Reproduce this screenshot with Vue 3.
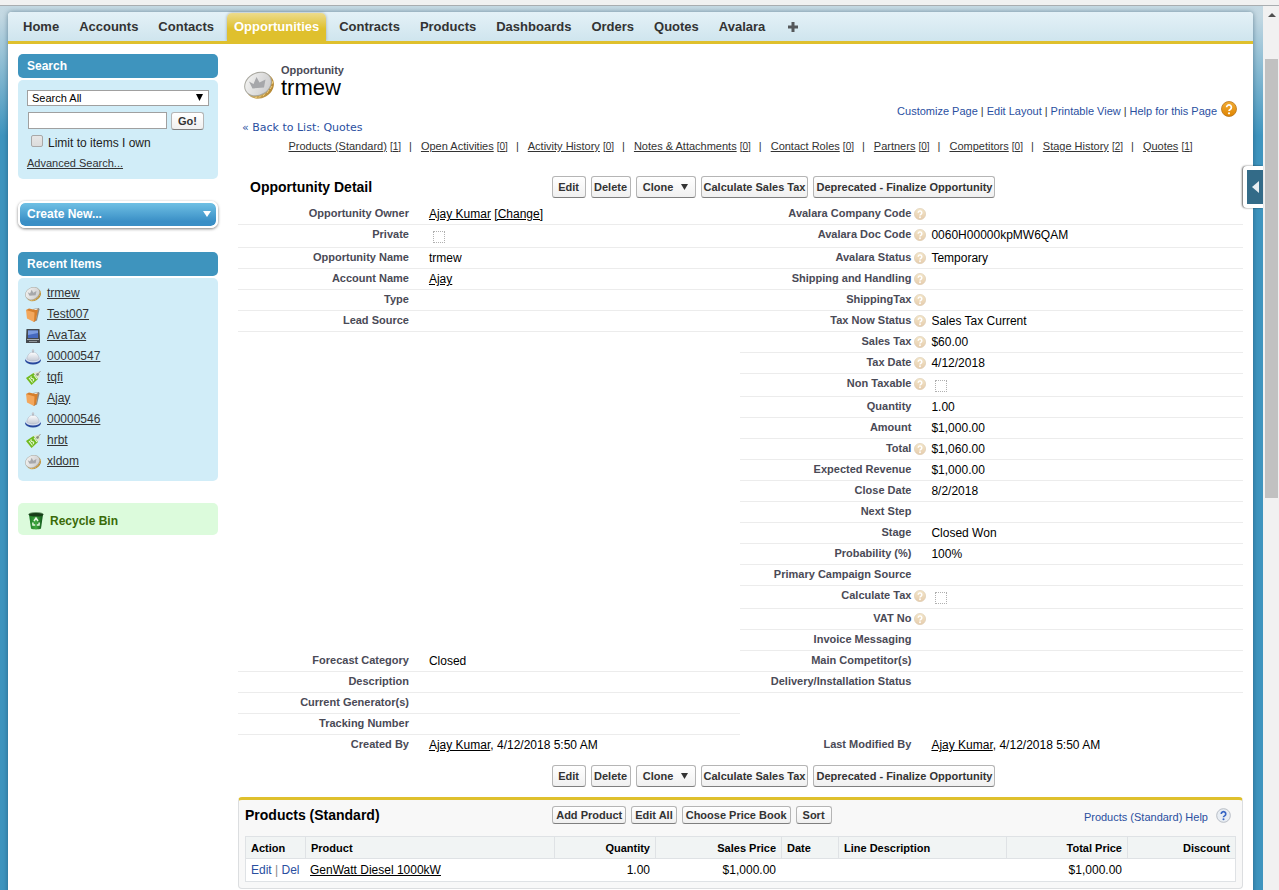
<script setup>
import { ref } from 'vue'

const tabs = ['Home', 'Accounts', 'Contacts', 'Opportunities', 'Contracts', 'Products', 'Dashboards', 'Orders', 'Quotes', 'Avalara']
const activeTab = 'Opportunities'
const query = ref('')
const limitOwn = ref(false)

const recent = [
  { icon: 'coin', name: 'trmew' },
  { icon: 'folder', name: 'Test007' },
  { icon: 'screen', name: 'AvaTax' },
  { icon: 'bell', name: '00000547' },
  { icon: 'tag', name: 'tqfi' },
  { icon: 'folder', name: 'Ajay' },
  { icon: 'bell', name: '00000546' },
  { icon: 'tag', name: 'hrbt' },
  { icon: 'coin', name: 'xldom' },
]

const pageLinks = ['Customize Page', 'Edit Layout', 'Printable View', 'Help for this Page']

const related = [
  ['Products (Standard)', 1], ['Open Activities', 0], ['Activity History', 0], ['Notes & Attachments', 0],
  ['Contact Roles', 0], ['Partners', 0], ['Competitors', 0], ['Stage History', 2], ['Quotes', 1],
]

const stamp = { link: 'Ajay Kumar', text: ', 4/12/2018 5:50 AM', plain: true }

const rows = [
  [{ label: 'Opportunity Owner', link: 'Ajay Kumar', change: true }, { label: 'Avalara Company Code', help: true }],
  [{ label: 'Private', check: true }, { label: 'Avalara Doc Code', help: true, text: '0060H00000kpMW6QAM' }],
  [{ label: 'Opportunity Name', text: 'trmew' }, { label: 'Avalara Status', help: true, text: 'Temporary' }],
  [{ label: 'Account Name', link: 'Ajay' }, { label: 'Shipping and Handling', help: true }],
  [{ label: 'Type' }, { label: 'ShippingTax', help: true }],
  [{ label: 'Lead Source' }, { label: 'Tax Now Status', help: true, text: 'Sales Tax Current' }],
  [null, { label: 'Sales Tax', help: true, text: '$60.00' }],
  [null, { label: 'Tax Date', help: true, text: '4/12/2018' }],
  [null, { label: 'Non Taxable', help: true, check: true }],
  [null, { label: 'Quantity', text: '1.00' }],
  [null, { label: 'Amount', text: '$1,000.00' }],
  [null, { label: 'Total', help: true, text: '$1,060.00' }],
  [null, { label: 'Expected Revenue', text: '$1,000.00' }],
  [null, { label: 'Close Date', text: '8/2/2018' }],
  [null, { label: 'Next Step' }],
  [null, { label: 'Stage', text: 'Closed Won' }],
  [null, { label: 'Probability (%)', text: '100%' }],
  [null, { label: 'Primary Campaign Source' }],
  [null, { label: 'Calculate Tax', help: true, check: true }],
  [null, { label: 'VAT No', help: true }],
  [null, { label: 'Invoice Messaging' }],
  [{ label: 'Forecast Category', text: 'Closed' }, { label: 'Main Competitor(s)' }],
  [{ label: 'Description' }, { label: 'Delivery/Installation Status' }],
  [{ label: 'Current Generator(s)' }, null],
  [{ label: 'Tracking Number' }, null],
  [{ ...stamp, label: 'Created By' }, { ...stamp, label: 'Last Modified By' }],
]

const actions = ['Edit', 'Delete', 'Clone', 'Calculate Sales Tax', 'Deprecated - Finalize Opportunity']
const productActions = ['Add Product', 'Edit All', 'Choose Price Book', 'Sort']
</script>

<template>
  <svg class="defs" aria-hidden="true">
    <defs>
      <linearGradient id="gFace" x1="0" y1="0" x2="1" y2="1">
        <stop offset="0" stop-color="#f6f6f4" /><stop offset="1" stop-color="#c8c8ca" />
      </linearGradient>
      <linearGradient id="gEdge" x1="0" y1="0" x2="1" y2="1">
        <stop offset="0" stop-color="#a3a29a" /><stop offset="0.5" stop-color="#c9a75c" /><stop offset="1" stop-color="#b07c22" />
      </linearGradient>
      <linearGradient id="gOrange" x1="0" y1="0" x2="0" y2="1">
        <stop offset="0" stop-color="#f2ad35" /><stop offset="1" stop-color="#df8400" />
      </linearGradient>
      <linearGradient id="gHint" x1="0" y1="0" x2="0" y2="1">
        <stop offset="0" stop-color="#f3e6c9" /><stop offset="1" stop-color="#e6cdae" />
      </linearGradient>
      <linearGradient id="gBell" x1="0" y1="0" x2="0" y2="1">
        <stop offset="0" stop-color="#ffffff" /><stop offset="1" stop-color="#c3c9d4" />
      </linearGradient>
      <linearGradient id="gBin" x1="0" y1="0" x2="1" y2="0">
        <stop offset="0" stop-color="#1d7a26" /><stop offset="0.5" stop-color="#3fa83f" /><stop offset="1" stop-color="#11501a" />
      </linearGradient>
      <symbol id="coin" viewBox="0 0 30 30">
        <ellipse cx="16" cy="16" rx="14.500" ry="12" transform="rotate(-30 16 16)" fill="url(#gEdge)" />
        <path d="M11 28l2-1M15 27.500l2-2M19 26l2-2.500M23 23l2-3M26 19l2-3M28 14l1-3" stroke="#f0d080" stroke-width="1" />
        <ellipse cx="14" cy="14" rx="14.500" ry="11.500" transform="rotate(-30 14 14)" fill="#a9a8a0" />
        <ellipse cx="14" cy="14" rx="13.500" ry="10.500" transform="rotate(-30 14 14)" fill="url(#gFace)" />
        <path d="M8.500 18.500L5 11.500l4.500 2.500L12.500 7l3 5.500L21.500 9.500l-1.500 8z" fill="#a6a7aa" />
      </symbol>
      <symbol id="folder" viewBox="0 0 16 16">
        <path d="M8 2l6-1 .5 1.500-2.500 11L8.500 15z" fill="#8f8c86" />
        <path d="M7 3l5.500-1.500-1.500 11-2 1z" fill="#f4f0e4" />
        <path d="M1 3l3-1.500L10.500 3 13 2.500 11 13l-2 2z" fill="#d67f2c" />
        <path d="M1 3l8.500 2.500L9 15l-7-3.500z" fill="#f3a75c" />
      </symbol>
      <symbol id="screen" viewBox="0 0 16 16">
        <path d="M1.500 1h13L15 11v4H1v-4z" fill="#45494e" />
        <path d="M3 2.500h10V10H3z" fill="#4568bf" />
        <path d="M3 2.500h10V5L3 7z" fill="#7b9be0" />
        <path d="M2 11h12v1H2z" fill="#a8adb2" />
        <path d="M4 13h8v1H4z" fill="#8f959a" />
      </symbol>
      <symbol id="bell" viewBox="0 0 16 16">
        <ellipse cx="8" cy="11.500" rx="7.800" ry="4" fill="#27479c" />
        <ellipse cx="8" cy="10" rx="7.500" ry="3.500" fill="#d8e0ee" />
        <path d="M2 10C2 6 5 3 8 3s6 3 6 7c-2.500 2.500-9.500 2.500-12 0z" fill="url(#gBell)" stroke="#aab2c0" stroke-width="0.500" />
        <path d="M7.300 3.500V1h1.400v2.500z" fill="#8d94a0" />
        <circle cx="8" cy="1.500" r="1.200" fill="#c4c8cf" />
      </symbol>
      <symbol id="tag" viewBox="0 0 16 16">
        <path d="M9 2.500l4-1 2 1v4L7 15 1 8.500z" fill="#dfe6d3" />
        <path d="M1 8l7.500-5 4.500 6-6.500 6z" fill="#6fba1f" />
        <path d="M4 8l3.500 4.500M6.500 6.500c-1.500 1 0 2 1 2.200s2 .8.5 2.300M9 5l3 4" fill="none" stroke="#e9f7d8" stroke-width="1.100" />
        <circle cx="12.500" cy="4.500" r="1.200" fill="#7a8070" />
        <path d="M12.500 4.500L15.500 1" stroke="#9a9a92" stroke-width="1" />
      </symbol>
      <symbol id="bin" viewBox="0 0 16 18">
        <path d="M1 2.500h14L13 16.500c-2 1.200-8 1.200-10 0z" fill="url(#gBin)" />
        <ellipse cx="8" cy="2.500" rx="7.500" ry="2" fill="#173d18" />
        <path d="M0.500 2.500a7.500 2 0 0 1 15 0" fill="none" stroke="#6f9a70" stroke-width="0.800" />
        <path d="M6 9l2-3 2 3M4.800 10.500L5 13h2.200M11.200 10.500L11 13H8.800" fill="none" stroke="#e4f6e0" stroke-width="1.500" />
      </symbol>
      <symbol id="help" viewBox="0 0 16 16">
        <circle cx="8" cy="8" r="7.500" fill="url(#gOrange)" stroke="#b8741a" stroke-width="0.800" />
        <path d="M5.600 6.300a2.400 2.400 0 1 1 3.600 2.100c-.9.500-1.200.8-1.200 1.700" fill="none" stroke="#fff" stroke-width="1.700" />
        <circle cx="8" cy="12.300" r="1.100" fill="#fff" />
      </symbol>
      <symbol id="hint" viewBox="0 0 16 16">
        <circle cx="8" cy="8" r="7.500" fill="url(#gHint)" stroke="#dcc9ae" stroke-width="0.800" />
        <path d="M5.600 6.300a2.400 2.400 0 1 1 3.600 2.100c-.9.500-1.200.8-1.200 1.700" fill="none" stroke="#fff" stroke-width="2" />
        <circle cx="8" cy="12.300" r="1.200" fill="#fff" />
      </symbol>
      <symbol id="helpBlue" viewBox="0 0 16 16">
        <circle cx="8" cy="8" r="7.300" fill="#e8edf3" stroke="#b4bac2" stroke-width="1" />
        <path d="M5.600 6.300a2.400 2.400 0 1 1 3.600 2.100c-.9.500-1.200.8-1.200 1.500" fill="none" stroke="#3564c4" stroke-width="1.800" />
        <circle cx="8" cy="12" r="1.100" fill="#3564c4" />
      </symbol>
    </defs>
  </svg>

  <div class="window">
    <div class="edge"></div>
    <div class="viewport">
      <div class="page">
        <div class="shell">
          <nav class="tabs">
            <a v-for="t in tabs" :key="t" href="#" class="tab" :class="{ active: t === activeTab }">{{ t }}</a>
            <a href="#" class="tab plus" aria-label="All Tabs">
              <svg width="10" height="10" viewBox="0 0 10 10"><path d="M3.500 0h3v3.500H10v3H6.500V10h-3V6.500H0v-3h3.500z" fill="#55585b" /></svg>
            </a>
          </nav>

          <div class="body">
            <aside class="side">
              <section class="module">
                <h2 class="module-head">Search</h2>
                <form class="module-body search" @submit.prevent>
                  <div class="select-wrap">
                    <select aria-label="Search scope" class="scope"><option>Search All</option></select>
                    <svg class="select-arrow" width="7" height="7" viewBox="0 0 7 7"><path d="M0 0h7L3.500 7z" fill="#000" /></svg>
                  </div>
                  <div class="find">
                    <input v-model="query" type="text" aria-label="Search text" class="query" />
                    <button type="submit" class="btn go">Go!</button>
                  </div>
                  <label class="limit"><input v-model="limitOwn" type="checkbox" />Limit to items I own</label>
                  <a href="#" class="advanced">Advanced Search...</a>
                </form>
              </section>

              <button type="button" class="create">
                Create New...
                <svg width="8" height="6" viewBox="0 0 8 6"><path d="M0 0h8L4 6z" fill="#fff" /></svg>
              </button>

              <section class="module">
                <h2 class="module-head">Recent Items</h2>
                <ul class="module-body recent">
                  <li v-for="(r, i) in recent" :key="i">
                    <svg width="16" height="16"><use :href="'#' + r.icon" /></svg>
                    <a href="#">{{ r.name }}</a>
                  </li>
                </ul>
              </section>

              <a href="#" class="recycle">
                <svg width="16" height="18"><use href="#bin" /></svg>
                Recycle Bin
              </a>
            </aside>

            <main class="main">
              <header class="title">
                <svg width="30" height="30"><use href="#coin" /></svg>
                <div>
                  <h1 class="kind">Opportunity</h1>
                  <h2 class="record">trmew</h2>
                </div>
                <div class="page-links">
                  <template v-for="(l, i) in pageLinks" :key="l"><span v-if="i">|</span><a href="#">{{ l }}</a></template>
                  <svg class="help-big" width="16" height="16"><use href="#help" /></svg>
                </div>
              </header>

              <div class="back">« <a href="#">Back to List: Quotes</a></div>

              <nav class="related">
                <template v-for="(r, i) in related" :key="r[0]">
                  <span v-if="i" class="bar">|</span>
                  <a href="#"><span class="name">{{ r[0] }}</span> <span class="count">[<u>{{ r[1] }}</u>]</span></a>
                </template>
              </nav>

              <section class="detail">
                <div class="bar-row">
                  <h3>Opportunity Detail</h3>
                  <div class="buttons">
                    <button v-for="a in actions" :key="a" type="button" class="btn large" :class="{ menu: a === 'Clone', first: a === 'Edit' }">
                      {{ a }}<svg v-if="a === 'Clone'" width="7" height="6" viewBox="0 0 7 6"><path d="M0 0h7L3.500 6z" fill="#333" /></svg>
                    </button>
                  </div>
                </div>

                <table class="fields">
                  <tbody>
                    <tr v-for="(row, i) in rows" :key="i" :class="{ tall: row.some(c => c && c.check) }">
                      <template v-for="(c, j) in row" :key="j">
                        <template v-if="c">
                          <th scope="row" :class="{ plain: c.plain }">
                            <label v-if="c.check" :for="'f' + i + j">{{ c.label }}</label>
                            <template v-else>{{ c.label }}</template>
                            <span class="hint"><svg v-if="c.help" width="12" height="12"><use href="#hint" /></svg></span>
                          </th>
                          <td :class="{ plain: c.plain }">
                            <input v-if="c.check" :id="'f' + i + j" type="checkbox" disabled class="flag" />
                            <a v-if="c.link" href="#">{{ c.link }}</a>{{ c.text }}
                            <template v-if="c.change"><a href="#">[Change]</a></template>
                          </td>
                        </template>
                        <td v-else colspan="2" class="plain"></td>
                      </template>
                    </tr>
                  </tbody>
                </table>

                <div class="bar-row bottom">
                  <div class="buttons">
                    <button v-for="a in actions" :key="a" type="button" class="btn large" :class="{ menu: a === 'Clone', first: a === 'Edit' }">
                      {{ a }}<svg v-if="a === 'Clone'" width="7" height="6" viewBox="0 0 7 6"><path d="M0 0h7L3.500 6z" fill="#333" /></svg>
                    </button>
                  </div>
                </div>
              </section>

              <section class="list">
                <div class="list-head">
                  <h3>Products (Standard)</h3>
                  <div class="buttons">
                    <button v-for="a in productActions" :key="a" type="button" class="btn small">{{ a }}</button>
                  </div>
                  <a href="#" class="list-help"><span>Products (Standard) Help</span>
                    <svg width="15" height="15"><use href="#helpBlue" /></svg>
                  </a>
                </div>
                <table class="grid">
                  <colgroup>
                    <col class="c-action" /><col class="c-product" /><col class="c-quantity" /><col class="c-price" />
                    <col class="c-date" /><col class="c-line" /><col class="c-total" /><col class="c-discount" />
                  </colgroup>
                  <thead>
                    <tr>
                      <th>Action</th><th>Product</th><th class="num">Quantity</th><th class="num">Sales Price</th>
                      <th>Date</th><th>Line Description</th><th class="num">Total Price</th><th class="num">Discount</th>
                    </tr>
                  </thead>
                  <tbody>
                    <tr>
                      <td class="act"><a href="#">Edit</a> | <a href="#">Del</a></td>
                      <td class="prod"><a href="#">GenWatt Diesel 1000kW</a></td>
                      <td class="num">1.00</td>
                      <td class="num">$1,000.00</td>
                      <td></td><td></td>
                      <td class="num">$1,000.00</td>
                      <td></td>
                    </tr>
                  </tbody>
                </table>
              </section>
            </main>
          </div>
        </div>
        <button type="button" class="drawer" aria-label="Open side panel">
          <span><svg width="7" height="12" viewBox="0 0 7 12"><path d="M7 0v12L0 6z" fill="#e8eef2" /></svg></span>
        </button>
      </div>
      <div class="scroll">
        <svg width="8" height="4" viewBox="0 0 8 4"><path d="M0 4l4-4 4 4z" fill="#505050" /></svg>
        <div class="thumb"></div>
      </div>
    </div>
  </div>
</template>

<style>
body {
  margin: 0;
  background: #3e94be;
}
</style>

<style scoped>
.defs {
  position: absolute;
  width: 0;
  height: 0;
}
.window {
  display: flex;
  flex-direction: column;
  height: 100vh;
  overflow: hidden;
  font: 12px/16px "Liberation Sans", Arial, sans-serif;
  color: #000;
}
h1, h2, h3, ul {
  margin: 0;
  padding: 0;
}
svg {
  display: block;
  flex: none;
}
.edge {
  flex: none;
  height: 5px;
  background: #f1f1f1;
  border-bottom: 1px solid #a9adb0;
}
.viewport {
  flex: 1;
  display: flex;
  min-height: 0;
}
.page {
  position: relative;
  flex: 1;
  min-width: 0;
  padding: 6px 10px 0 8px;
  background: linear-gradient(#c5d9e3 0, #c3d8e2 10px, #3e94be 130px);
}
.shell {
  min-height: 100%;
  background: #fff;
  border-radius: 4px 4px 0 0;
  box-shadow: 0 0 5px rgba(20, 60, 85, 0.5);
}
.tabs {
  display: flex;
  align-items: stretch;
  gap: 6px;
  height: 29px;
  padding-left: 8px;
  border-bottom: 3px solid #dfc02d;
  border-radius: 4px 4px 0 0;
  background: linear-gradient(#e4f1f7, #cfe5ee);
}
.tab {
  padding: 0 7px;
  color: #333;
  font-size: 13px;
  font-weight: bold;
  line-height: 29px;
  text-decoration: none;
}
.tab.active {
  margin-top: 1px;
  line-height: 27px;
  color: #fff;
  border-radius: 5px 5px 0 0;
  background: linear-gradient(#ecdb8c, #dfc02d 16px);
  box-shadow: 0 0 3px rgba(0, 0, 0, 0.3);
  clip-path: inset(-4px -4px 0);
}
.plus {
  display: flex;
  align-items: center;
  margin-left: 3px;
}
.body {
  display: flex;
  gap: 20px;
  padding: 10px;
}
.side {
  flex: none;
  width: 200px;
}
.module-head {
  height: 24px;
  padding-left: 9px;
  border-radius: 5px;
  background: #3e94be;
  color: #fff;
  font-size: 12px;
  line-height: 24px;
}
.module-body {
  margin-top: 2px;
  border-radius: 5px;
  background: #d1edf8;
}
.search {
  padding: 10px 9px 8px;
}
.select-wrap {
  position: relative;
}
.select-arrow {
  position: absolute;
  top: 4px;
  right: 6px;
  pointer-events: none;
}
.scope {
  display: block;
  box-sizing: border-box;
  width: 100%;
  height: 16px;
  padding: 0 4px;
  border: 1px solid #a0a0a0;
  border-radius: 0;
  background: #fff;
  color: #000;
  font: 11px/14px "Liberation Sans", Arial, sans-serif;
  appearance: none;
}
.find {
  display: flex;
  gap: 4px;
  margin: 6px 5px 0 1px;
}
.query {
  box-sizing: border-box;
  flex: 1;
  min-width: 0;
  height: 17px;
  padding: 0 2px;
  border: 1px solid #a0a0a0;
}
.limit {
  display: flex;
  align-items: center;
  gap: 5px;
  height: 20px;
  margin: 3px 0 2px 4px;
  color: #222;
}
.limit input {
  box-sizing: border-box;
  width: 12px;
  height: 12px;
  margin: 0 0 5px;
  border: 1px solid #a8a8a8;
  border-radius: 2px;
  background: linear-gradient(#e6e6e6, #dcdcdc);
  appearance: none;
}
.limit input:checked {
  background: #3e94be;
}
.advanced {
  color: #333;
  font-size: 11px;
}
.btn {
  box-sizing: border-box;
  display: flex;
  align-items: center;
  justify-content: center;
  min-width: 36px;
  height: 22px;
  padding: 0 2px;
  border: 1px solid #b5b5b5;
  border-bottom-color: #7f7f7f;
  border-radius: 3px;
  background: linear-gradient(#fff, #f0f0f0);
  color: #333;
  font: bold 11px/16px "Liberation Sans", Arial, sans-serif;
  white-space: nowrap;
}
.btn.large {
  min-width: 40px;
}
.btn.first {
  min-width: 34px;
}
.btn.menu {
  gap: 8px;
  min-width: 60px;
}
.btn.small {
  height: 18px;
  padding: 0 3px;
}
.btn.go {
  min-width: 33px;
  height: 18px;
}
.create {
  box-sizing: border-box;
  display: flex;
  align-items: center;
  justify-content: space-between;
  width: 200px;
  height: 27px;
  margin: 22px 0 24px;
  padding: 0 5px 2px 7px;
  border: 2px solid #fff;
  border-radius: 7px;
  background: linear-gradient(#6fc0e4, #3a8fc6 80%) padding-box;
  box-shadow: 0 1px 3px rgba(0, 0, 0, 0.5);
  color: #fff;
  font: bold 12px/20px "Liberation Sans", Arial, sans-serif;
}
.recent {
  padding: 4px 7px 10px;
  list-style: none;
}
.recent li {
  display: flex;
  align-items: center;
  gap: 6px;
  height: 21px;
}
.recent svg {
  margin-top: 3px;
}
.recent a {
  color: #333;
}
.recycle {
  display: flex;
  align-items: center;
  gap: 6px;
  height: 32px;
  margin-top: 22px;
  padding: 3px 10px 0;
  box-sizing: border-box;
  border-radius: 5px;
  background: #dcfbdc;
  color: #3a6a08;
  font-weight: bold;
  text-decoration: none;
}
.main {
  flex: 1;
  min-width: 0;
}
.title {
  display: flex;
  gap: 7px;
  padding: 8px 6px 0;
}
.title > svg {
  margin-top: 8px;
}
.kind {
  color: #4a4a56;
  font-size: 11px;
  line-height: 16px;
}
.record {
  font-size: 22px;
  font-weight: normal;
  line-height: 20px;
}
.page-links {
  display: flex;
  align-items: flex-end;
  gap: 3px;
  height: 18px;
  margin: 39px 0 0 auto;
  color: #333;
  font-size: 11px;
  line-height: 16px;
}
.help-big {
  margin: 0 0 2px 1px;
}
a {
  color: #2a4f9f;
}
.page-links a,
.back a,
.list-help,
.act a {
  color: #2a4f9f;
  text-decoration: none;
}
.back {
  margin: 0 4px;
  color: #2a4f9f;
  font: 11px/18px "DejaVu Sans", sans-serif;
}
.related {
  display: flex;
  justify-content: center;
  height: 18px;
  color: #333;
  font-size: 11px;
  line-height: 18px;
  white-space: nowrap;
}
.related a {
  color: #333;
  text-decoration: none;
}
.name {
  text-decoration: underline;
}
.count {
  font-size: 10px;
}
.bar {
  margin: 0 9px 0 8px;
}
.bar-row {
  position: relative;
  display: flex;
  align-items: center;
  height: 22px;
  margin: 21px 0 6px;
}
.bar-row h3 {
  padding-left: 12px;
  font-size: 14px;
}
.buttons {
  position: absolute;
  left: 31%;
  display: flex;
  gap: 5px;
}
.bar-row.bottom {
  margin: 9px 0 10px;
}
.bar-row .buttons {
  margin-left: 2px;
}
.fields {
  width: 100%;
  border-collapse: separate;
  border-spacing: 0;
  table-layout: fixed;
}
.fields tr {
  height: 21px;
}
.fields tr.tall {
  height: 23px;
}
.fields th,
.fields td {
  padding: 0;
  border-bottom: 1px solid #ececec;
  vertical-align: top;
}
.fields .plain {
  border-bottom-color: transparent;
}
.fields th {
  width: 19%;
  color: #4a4a56;
  font-size: 11px;
  line-height: 18px;
  text-align: right;
}
.fields td {
  width: 31%;
  line-height: 20px;
}
.fields a,
.prod a {
  color: #000;
}
.hint {
  float: right;
  width: 12px;
  height: 12px;
  margin: 4px 5px 0 3px;
}
.flag {
  box-sizing: border-box;
  display: block;
  width: 12px;
  height: 12px;
  margin: 6px 4px 0;
  border: 1px dotted #b0b0b0;
  appearance: none;
}
.list {
  padding: 0 6px 6px;
  border: 1px solid #dcdee0;
  border-top: 3px solid #dfc02d;
  border-radius: 4px;
  background: #f8f8f8;
}
.list-head {
  position: relative;
  box-sizing: border-box;
  display: flex;
  align-items: center;
  justify-content: space-between;
  height: 36px;
  padding-bottom: 6px;
}
.list-head h3 {
  font-size: 14px;
}
.list-help {
  display: flex;
  align-items: center;
  gap: 8px;
  padding-right: 5px;
  font-size: 11px;
}
.list-help span {
  padding-top: 4px;
}
.grid {
  width: 100%;
  border: 1px solid #dfe2e5;
  border-collapse: separate;
  border-spacing: 0;
  background: #fff;
  table-layout: fixed;
}
.grid th,
.grid td {
  height: 21px;
  padding: 0 5px;
  font-size: 11px;
  text-align: left;
}
.grid th {
  border-bottom: 1px solid #dfe2e5;
  background: #f1f4f4;
}
.grid th + th {
  border-left: 1px solid #dfe2e5;
}
.grid td {
  height: 22px;
  font-size: 12px;
}
.grid .act {
  color: #888;
  white-space: nowrap;
}
.grid .num {
  text-align: right;
}
.c-action { width: 59px; }
.c-product { width: 249px; }
.c-quantity { width: 101px; }
.c-price { width: 126px; }
.c-date { width: 57px; }
.c-line { width: 168px; }
.c-total { width: 121px; }
.c-discount { width: 108px; }
.drawer {
  position: absolute;
  top: 160px;
  right: 0;
  box-sizing: border-box;
  width: 20px;
  height: 42px;
  padding: 4px 0 4px 4px;
  border: 0;
  border-radius: 4px 0 0 4px;
  background: #fff;
  box-shadow: -1px 0 2px rgba(0, 0, 0, 0.6);
}
.drawer span {
  display: flex;
  align-items: center;
  justify-content: center;
  height: 100%;
  background: #336b88;
}
.scroll {
  flex: none;
  display: flex;
  flex-direction: column;
  width: 13px;
  padding: 7px 1px 0 2px;
  background: #f1f1f1;
}
.scroll svg {
  margin: 0 auto;
}
.thumb {
  height: 50%;
  margin-top: 42px;
  background: #c1c1c1;
}
</style>
